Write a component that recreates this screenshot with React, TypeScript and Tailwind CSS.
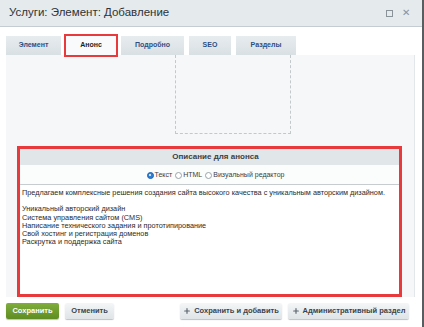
import { Plus } from 'lucide-react'

const tabs = [
  { label: 'Элемент', w: 'w-[55px]' },
  { label: 'Анонс', w: 'w-[50px]', active: true },
  { label: 'Подробно', w: 'w-[63px]' },
  { label: 'SEO', w: 'w-[42px]' },
  { label: 'Разделы', w: 'w-[60px]' },
]

const lines = [
  'Предлагаем комплексные решения создания сайта высокого качества с уникальным авторским дизайном.',
  '',
  'Уникальный авторский дизайн',
  'Система управления сайтом (CMS)',
  'Написание технического задания и прототипирование',
  'Свой хостинг и регистрация доменов',
  'Раскрутка и поддержка сайта',
]

function Radio({ label, checked }: { label: string; checked?: boolean }) {
  return (
    <span className="flex items-center gap-[1px]">
      <span
        className={
          checked
            ? 'w-[7px] h-[7px] rounded-full bg-[#2f7fd8] border border-[#1f66b8] flex items-center justify-center'
            : 'w-[7px] h-[7px] rounded-full bg-white border border-[#9aa3a8]'
        }
      >
        {checked && <span className="w-[2px] h-[2px] rounded-full bg-white" />}
      </span>
      {label}
    </span>
  )
}

export default function App() {
  return (
    <div
      className="w-[424px] h-[327px] bg-white flex flex-col border-r-2 border-[#5a5d60] overflow-hidden"
      style={{ fontFamily: '"Liberation Sans", Arial, sans-serif' }}
    >
      {/* title bar */}
      <div className="h-[27px] shrink-0 bg-[#e5eaed] border-b border-[#c5cdd2] flex items-center pl-[9px] pr-[12px]">
        <span className="text-[11.5px] text-[#2e3338] flex-1">Услуги: Элемент: Добавление</span>
        <span className="w-[7px] h-[7px] border border-[#8a9398] mr-[9px]" />
        <span className="text-[#8a9398] text-[10px] leading-none">✕</span>
      </div>

      {/* tabs */}
      <div className="flex gap-[5px] pl-[6px] mt-[9px] h-[19px] shrink-0">
        {tabs.map(t => (
          <div
            key={t.label}
            className={
              t.active
                ? `${t.w} h-full bg-[#f8fafb] outline-[2.5px] outline-solid outline-[#e8393d] flex items-center justify-center text-[7px] font-bold text-[#1d1d1d] z-10`
                : `${t.w} h-full bg-gradient-to-b from-[#e7ecef] to-[#d9e0e4] flex items-center justify-center text-[7px] font-bold text-[#2d4f86]`
            }
          >
            {t.label}
          </div>
        ))}
      </div>

      {/* panel */}
      <div className="ml-[6px] mr-[7px] h-[242px] shrink-0 bg-[#f5f7f8] border-r border-[#e3e7e9] flex flex-col">
        <div className="ml-[169px] w-[116px] h-[79px] shrink-0 border-x border-b border-dashed border-[#c3c8cb] border-t-0" />

        <div className="ml-[11px] w-[385px] mt-[12px] h-[151px] border-[3px] border-[#e8393d] flex flex-col bg-white">
          <div className="h-[16px] shrink-0 bg-[#e1e6e9] flex items-center justify-center pl-[12px] text-[8px] font-bold text-[#3a3f44]">
            Описание для анонса
          </div>
          <div className="h-[19px] shrink-0 flex items-center justify-center gap-[3px] text-[7px] text-[#3a3f44] bg-[#fbfcfc] pl-[12px] pt-[1px]">
            <Radio label="Текст" checked />
            <Radio label="HTML" />
            <Radio label="Визуальный редактор" />
          </div>
          <div className="flex-1 border-t border-[#c7cccf] bg-white px-[2px] pt-[4px] text-[7.3px] leading-[8.2px] text-[#2b2b2b]">
            {lines.map((l, i) => (
              <div key={i} className="h-[8.2px] whitespace-nowrap">{l}</div>
            ))}
          </div>
        </div>
      </div>

      {/* buttons */}
      <div className="flex items-center mt-[6px] pl-[6px] h-[16px]">
        <button className="w-[53px] h-full rounded-[2px] bg-gradient-to-b from-[#80ad3c] to-[#5f8d21] text-white text-[7.5px] font-bold shadow-[0_1px_1px_rgba(0,0,0,0.25)]">
          Сохранить
        </button>
        <button className="ml-[6px] w-[49px] h-full rounded-[2px] bg-gradient-to-b from-[#f4f6f7] to-[#dfe4e7] text-[#3a444c] text-[7.5px] font-bold shadow-[0_1px_1px_rgba(0,0,0,0.25)]">
          Отменить
        </button>
        <button className="ml-[66px] w-[102px] h-full rounded-[2px] bg-gradient-to-b from-[#f4f6f7] to-[#dfe4e7] text-[#3a444c] text-[7.5px] font-bold shadow-[0_1px_1px_rgba(0,0,0,0.25)] flex items-center justify-center gap-[3px]">
          <Plus size={8} strokeWidth={3.5} className="text-[#5b666e]" />
          Сохранить и добавить
        </button>
        <button className="ml-[6px] w-[121px] h-full rounded-[2px] bg-gradient-to-b from-[#f4f6f7] to-[#dfe4e7] text-[#3a444c] text-[7.5px] font-bold shadow-[0_1px_1px_rgba(0,0,0,0.25)] flex items-center justify-center gap-[3px]">
          <Plus size={8} strokeWidth={3.5} className="text-[#5b666e]" />
          Административный раздел
        </button>
      </div>
    </div>
  )
}
